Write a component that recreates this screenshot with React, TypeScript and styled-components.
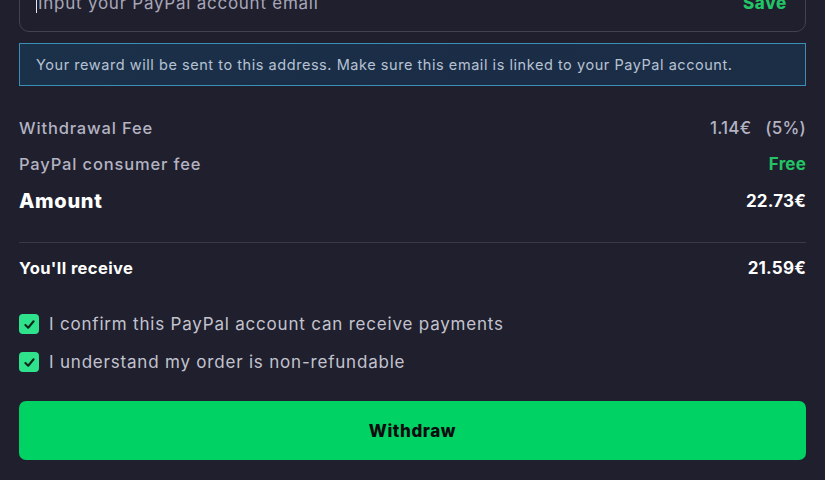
import React from "react";
import styled, { createGlobalStyle } from "styled-components";

const Global = createGlobalStyle`
  html, body { margin: 0; padding: 0; background: #1f1f2d; }
  body { font-family: "Inter", "Open Sans", sans-serif; overflow: hidden; }
  * { box-sizing: border-box; }
`;

const Page = styled.div`
  width: 825px;
  height: 480px;
  background: #1f1f2d;
  padding: 0 19px 0 19px;
  display: flex;
  flex-direction: column;
  overflow: hidden;
`;

const InputBox = styled.div`
  margin-top: -26px;
  height: 58px;
  border: 1px solid #43434f;
  border-radius: 10px;
  background: #201f2e;
  display: flex;
  align-items: center;
  justify-content: space-between;
  padding: 0 18px 0 16px;
`;

const EmailInput = styled.input`
  flex: 1;
  background: transparent;
  border: none;
  outline: none;
  font-family: inherit;
  font-size: 17px;
  letter-spacing: 0.75px;
  color: #e6e6ee;
  border-left: 1.5px solid #e6e6ee;
  padding: 0 0 0 1px;
  height: 20px;
  &::placeholder { color: #a7a7b8; }
`;

const SaveButton = styled.button`
  background: none;
  border: none;
  padding: 0;
  font-family: inherit;
  font-size: 17px;
  font-weight: 800;
  letter-spacing: 0.7px;
  color: #22c466;
`;

const InfoBox = styled.div`
  margin-top: 11px;
  height: 43px;
  border: 1px solid #3b8fb6;
  background: linear-gradient(90deg, #1b3049 0%, #1b2d46 60%, #1c2d46 100%);
  display: flex;
  align-items: center;
  padding: 0 16px;
  font-size: 14.5px;
  color: #b6c2d4;
  letter-spacing: 0.55px;
`;

const Summary = styled.div`
  margin-top: 30px;
  display: flex;
  flex-direction: column;
  gap: 12px;
`;

const Row = styled.div<{ $strong?: boolean }>`
  height: ${(p) => (p.$strong ? 26 : 24)}px;
  display: flex;
  align-items: center;
  justify-content: space-between;
`;

const Label = styled.span<{ $variant?: "muted" | "big" | "bold" }>`
  font-size: ${(p) => (p.$variant === "big" ? 20 : 16.5)}px;
  font-weight: ${(p) => (p.$variant === "big" ? 800 : p.$variant === "bold" ? 700 : 500)};
  letter-spacing: ${(p) => (p.$variant === "big" ? 0.7 : p.$variant === "bold" ? 0.4 : 0.85)}px;
  color: ${(p) => (p.$variant === "muted" || !p.$variant ? "#b3b3c2" : "#ffffff")};
`;

const Value = styled.span<{ $color?: string; $weight?: number }>`
  font-size: 17px;
  font-weight: ${(p) => p.$weight ?? 500};
  color: ${(p) => p.$color ?? "#b3b3c2"};
  letter-spacing: 0.2px;
  white-space: nowrap;
`;

const Percent = styled.span`
  margin-left: 14px;
`;

const Divider = styled.hr`
  margin: 28px 0 13px;
  border: none;
  border-top: 1px solid #383846;
  height: 0;
`;

const Checks = styled.div`
  margin-top: 32px;
  display: flex;
  flex-direction: column;
  gap: 14px;
`;

const CheckRow = styled.label`
  height: 24px;
  display: flex;
  align-items: center;
  gap: 10px;
  font-size: 17px;
  letter-spacing: 0.8px;
  color: #c3c3cf;
  cursor: pointer;
`;

const Box = styled.span`
  width: 20px;
  height: 20px;
  border-radius: 4px;
  background: #2fe38c;
  display: inline-flex;
  align-items: center;
  justify-content: center;
  flex-shrink: 0;
`;

const WithdrawButton = styled.button`
  margin-top: 27px;
  height: 59px;
  width: 100%;
  border: none;
  border-radius: 7px;
  background: #00d263;
  font-family: inherit;
  font-size: 17px;
  font-weight: 800;
  letter-spacing: 0.6px;
  color: #0b0b10;
`;

const Check = () => (
  <Box>
    <svg width="13" height="13" viewBox="0 0 12 12" fill="none">
      <path d="M2.2 6.4 L4.8 9 L9.8 3" stroke="#10261a" strokeWidth="1.9" strokeLinecap="round" strokeLinejoin="round" />
    </svg>
  </Box>
);

export default function App() {
  return (
    <Page>
      <Global />
      <InputBox>
        <EmailInput placeholder="Input your PayPal account email" />
        <SaveButton>Save</SaveButton>
      </InputBox>
      <InfoBox>Your reward will be sent to this address. Make sure this email is linked to your PayPal account.</InfoBox>
      <Summary>
        <Row>
          <Label $variant="muted">Withdrawal Fee</Label>
          <Value>
            1.14€<Percent>(5%)</Percent>
          </Value>
        </Row>
        <Row>
          <Label $variant="muted">PayPal consumer fee</Label>
          <Value $color="#22c466" $weight={700}>Free</Value>
        </Row>
        <Row $strong>
          <Label $variant="big">Amount</Label>
          <Value $color="#ffffff" $weight={700}>22.73€</Value>
        </Row>
      </Summary>
      <Divider />
      <Row>
        <Label $variant="bold">You'll receive</Label>
        <Value $color="#ffffff" $weight={700}>21.59€</Value>
      </Row>
      <Checks>
        <CheckRow>
          <Check />I confirm this PayPal account can receive payments
        </CheckRow>
        <CheckRow>
          <Check />I understand my order is non-refundable
        </CheckRow>
      </Checks>
      <WithdrawButton>Withdraw</WithdrawButton>
    </Page>
  );
}
